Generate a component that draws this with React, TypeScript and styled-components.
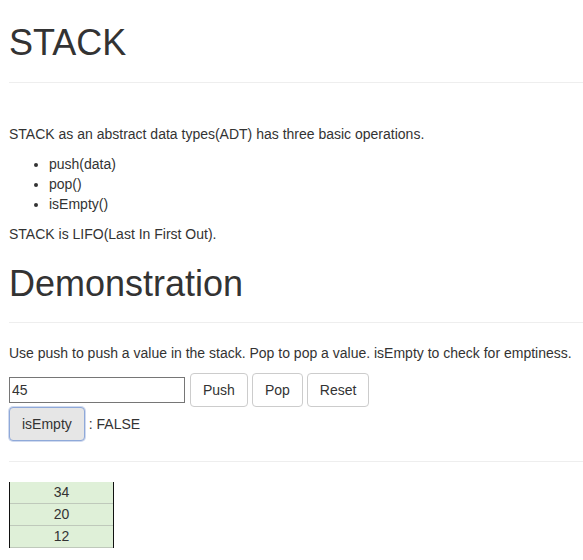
import React from "react";
import styled, { createGlobalStyle } from "styled-components";

const Global = createGlobalStyle`
  html, body { margin: 0; padding: 0; background: #fff; }
  body {
    font-family: "Liberation Sans", Arial, sans-serif;
    font-size: 14px;
    line-height: 20px;
    color: #333;
  }
  * { box-sizing: border-box; }
`;

const Page = styled.div`
  padding: 0 0 20px 9px;
`;

const Header = styled.div<{ $top: number; $mb: number }>`
  margin-top: ${(p) => p.$top}px;
  padding-bottom: 9px;
  border-bottom: 1px solid #eee;
  margin-bottom: ${(p) => p.$mb}px;
`;

const Title = styled.h1`
  margin: 0 0 10px;
  font-size: 36px;
  font-weight: 500;
  line-height: 1.1;
  color: #333;
`;

const Para = styled.p`
  margin: 0 0 10px;
`;

const List = styled.ul`
  margin: 0 0 10px;
  padding-left: 40px;
`;

const Row = styled.div`
  display: flex;
  align-items: center;
  gap: 4px;
  height: 34px;
`;

const ValueInput = styled.input`
  width: 176px;
  height: 26px;
  margin-right: 1px;
  border: 1px solid #767676;
  border-radius: 0;
  padding: 1px 2px;
  font-family: "Liberation Sans", Arial, sans-serif;
  font-size: 14px;
  color: #333;
`;

const Btn = styled.button<{ $active?: boolean }>`
  height: 34px;
  padding: 6px 12px;
  font-family: "Liberation Sans", Arial, sans-serif;
  font-size: 14px;
  line-height: 20px;
  color: #333;
  background: ${(p) => (p.$active ? "#e6e6e6" : "#fff")};
  border: 1px solid ${(p) => (p.$active ? "#8fa9d9" : "#ccc")};
  border-radius: 4px;
  box-shadow: ${(p) => (p.$active ? "0 0 0 1px rgba(120,150,210,0.35)" : "none")};
  cursor: pointer;
`;

const Result = styled.span`
  margin-left: 0;
`;

const Rule = styled.hr`
  margin: 20px 0;
  border: 0;
  border-top: 1px solid #eee;
`;

const StackBox = styled.div`
  width: 105px;
  border-left: 1px solid #111;
  border-right: 1px solid #111;
`;

const Cell = styled.div`
  height: 22px;
  line-height: 21px;
  text-align: center;
  background: #dff0d8;
  border-bottom: 1px solid #bfc9bb;
`;

export default function App() {
  const items = [34, 20, 12];
  return (
    <>
      <Global />
      <Page>
        <Header $top={23} $mb={41}>
          <Title>STACK</Title>
        </Header>
        <Para>STACK as an abstract data types(ADT) has three basic operations.</Para>
        <List>
          <li>push(data)</li>
          <li>pop()</li>
          <li>isEmpty()</li>
        </List>
        <Para>STACK is LIFO(Last In First Out).</Para>
        <Header $top={20} $mb={20}>
          <Title>Demonstration</Title>
        </Header>
        <Para>Use push to push a value in the stack. Pop to pop a value. isEmpty to check for emptiness.</Para>
        <Row>
          <ValueInput defaultValue="45" />
          <Btn>Push</Btn>
          <Btn>Pop</Btn>
          <Btn>Reset</Btn>
        </Row>
        <Row>
          <Btn $active>isEmpty</Btn>
          <Result>: FALSE</Result>
        </Row>
        <Rule />
        <StackBox>
          {items.map((v) => (
            <Cell key={v}>{v}</Cell>
          ))}
        </StackBox>
      </Page>
    </>
  );
}
